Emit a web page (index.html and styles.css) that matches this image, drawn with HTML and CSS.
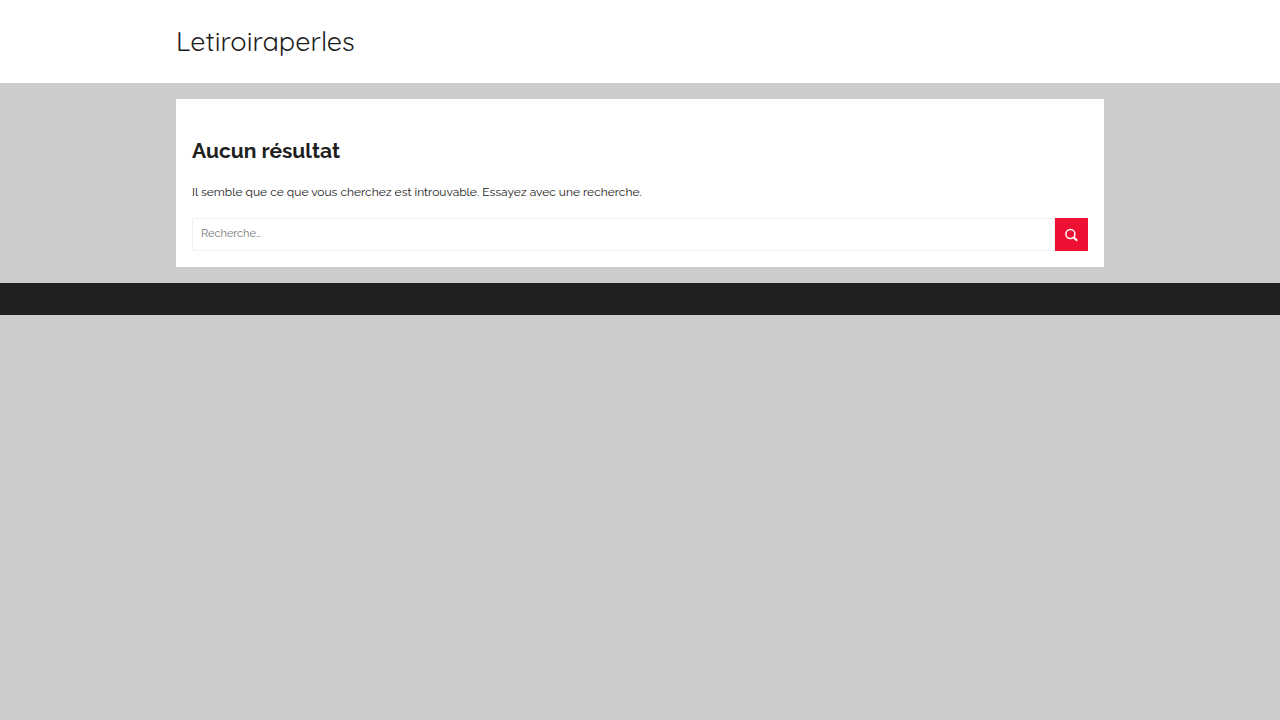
FILE: index.html
```html
<!DOCTYPE html>
<html lang="fr">
<head>
  <meta charset="UTF-8">
  <meta name="viewport" content="width=device-width, initial-scale=1.0">
  <title>Letiroiraperles</title>
  <link rel="stylesheet" href="styles.css">
</head>
<body>
  <header class="site-header">
    <div class="container">
      <p class="site-title"><a href="#">Letiroiraperles</a></p>
    </div>
  </header>

  <main class="container">
    <section class="no-results">
      <h1 class="page-title">Aucun résultat</h1>
      <p>Il semble que ce que vous cherchez est introuvable. Essayez avec une recherche.</p>
      <form class="search-form" role="search">
        <input type="search" class="search-field" placeholder="Recherche…" aria-label="Recherche">
        <button type="submit" class="search-submit" aria-label="Rechercher">
          <svg viewBox="0 0 14 14" width="14" height="14" fill="none" stroke="currentColor">
            <circle cx="5.4" cy="6" r="4.5" stroke-width="1.5"/>
            <path d="M8.6 9.2L12.2 12.8" stroke-width="2"/>
          </svg>
        </button>
      </form>
    </section>
  </main>

  <footer class="site-footer"></footer>
</body>
</html>
```

FILE: styles.css
```css
* {
  box-sizing: border-box;
}
body {
  margin: 0;
  background: #ccc;
  color: #202020;
  font-family: Raleway, Lato, sans-serif;
  font-size: 12px;
  line-height: 20px;
}
.container {
  max-width: 960px;
  margin: 0 auto;
  padding: 0 16px;
}
.site-header {
  background: #fff;
  padding: 24px 0;
}
.site-title {
  margin: 0;
  font-family: Quicksand, Lato, sans-serif;
  font-size: 27px;
  line-height: 35px;
}
.site-title a {
  color: #202020;
  text-decoration: none;
}
.no-results {
  margin: 16px 0;
  padding: 40px 16px 16px;
  background: #fff;
}
.page-title {
  margin: 0 0 19px;
  font-size: 21px;
  line-height: 24px;
}
.no-results p {
  margin: 0 0 16px;
}
.search-form {
  display: flex;
}
.search-field {
  flex: 1;
  min-width: 0;
  height: 33px;
  margin: 0;
  padding: 0 8px 2px;
  border: 1px solid #f0f0f0;
  border-radius: 0;
  background: #fff;
  color: #202020;
  font: inherit;
  font-size: 11px;
}
.search-field::placeholder {
  color: #777;
}
.search-submit {
  display: flex;
  align-items: center;
  justify-content: center;
  width: 33px;
  height: 33px;
  padding: 0;
  border: none;
  background: #ee1133;
  color: #fff;
  cursor: pointer;
}
.site-footer {
  height: 32px;
  background: #202020;
}
```
